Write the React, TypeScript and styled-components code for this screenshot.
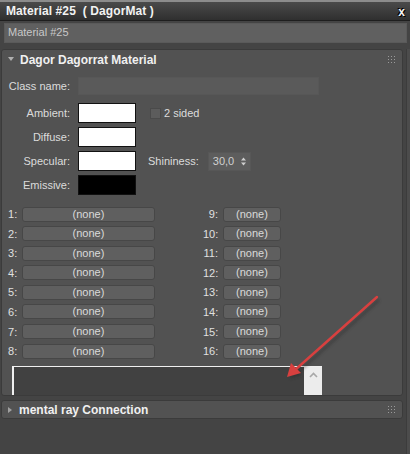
import React from "react";
import styled, { createGlobalStyle } from "styled-components";

const Global = createGlobalStyle`
  html, body { margin: 0; padding: 0; background: #444444; }
  body { font-family: Tahoma, "Liberation Sans", "DejaVu Sans", sans-serif; font-size: 11px; color: #dcdcdc; }
  * { box-sizing: border-box; }
`;

const Frame = styled.div`
  position: relative;
  width: 410px;
  height: 454px;
  background: #444444;
  overflow: hidden;
`;

const TitleBar = styled.div`
  height: 21px;
  border-top: 2px solid #8c8c8c;
  border-bottom: 1px solid #1e1e1e;
  background: linear-gradient(#4a4a4a, #2f2f2f);
  display: flex;
  align-items: center;
  justify-content: space-between;
  padding: 0 5px 0 6px;
`;

const Title = styled.span`
  font-weight: bold;
  font-size: 12px;
  color: #f2f2f2;
  white-space: pre;
  letter-spacing: 0.1px;
`;

const Close = styled.span`
  font-weight: bold;
  font-size: 12px;
  color: #f5f5f5;
  text-shadow: 0 0 1px #000, 1px 1px 0 #000, -1px -1px 0 #000;
  margin-top: 1px;
`;

const NameRow = styled.div`
  padding: 2px 3px 0 4px;
`;

const NameField = styled.div`
  height: 20px;
  background: #606060;
  border: 1px solid #5a5a5a;
  color: #c8c8c8;
  padding: 2px 3px;
  font-size: 11px;
`;

const Panel = styled.div`
  display: flex;
  margin-top: 6px;
`;

const Stack = styled.div`
  width: 403px;
  padding-left: 1px;
  display: flex;
  flex-direction: column;
  gap: 4px;
`;

const Track = styled.div`
  margin-left: 3px;
  width: 4px;
  height: 405px;
  background: #4c4c4c;
  border-left: 1px solid #3c3c3c;
`;

const Rollout = styled.div`
  background: #525252;
  border: 1px solid #3b3b3b;
  border-radius: 3px;
`;

const Header = styled.div<{ $h: number }>`
  height: ${(p) => p.$h}px;
  display: flex;
  align-items: center;
  padding: 0 7px 0 6px;
  font-weight: bold;
  font-size: 12px;
  color: #f0f0f0;
`;

const HeaderText = styled.span`
  flex: 1;
  margin-left: 6px;
`;

const Grip = styled.svg`
  width: 7px;
  height: 7px;
`;

const Body = styled.div`
  height: 326px;
  overflow: hidden;
  padding-top: 8px;
`;

const ClassRow = styled.div`
  display: grid;
  grid-template-columns: 68px 241px;
  column-gap: 8px;
  align-items: center;
  height: 18px;
`;

const Label = styled.span`
  text-align: right;
  white-space: nowrap;
`;

const Field = styled.div`
  height: 18px;
  background: #5a5a5a;
  border: 1px solid #575757;
`;

const ColorGrid = styled.div`
  margin-top: 8px;
  display: grid;
  grid-template-columns: 68px 58px 12px auto;
  grid-auto-rows: 20px;
  row-gap: 4px;
  column-gap: 8px;
  align-items: center;
`;

const Swatch = styled.div<{ $c: string }>`
  width: 58px;
  height: 20px;
  background: ${(p) => p.$c};
  border: 1px solid #111;
`;

const CheckWrap = styled.label`
  grid-column: 3 / span 2;
  display: flex;
  align-items: center;
  gap: 3px;
  margin-left: 6px;
`;

const Box = styled.span`
  width: 11px;
  height: 11px;
  background: #5c5c5c;
  border: 1px solid #4a4a4a;
`;

const ShinyWrap = styled.div`
  grid-column: 3 / span 2;
  display: flex;
  align-items: center;
  gap: 9px;
  margin-left: 4px;
`;

const Spinner = styled.div`
  width: 43px;
  height: 19px;
  background: #5d5d5d;
  border: 1px solid #575757;
  display: flex;
  align-items: center;
  justify-content: space-between;
  padding: 0 4px 0 4px;
  color: #d0d0d0;
`;

const Slots = styled.div`
  margin-top: 12px;
  display: grid;
  grid-template-columns: 12px 133px 44px 18px 58px;
  grid-auto-rows: 14px;
  row-gap: 5.6px;
  column-gap: 2px;
  padding-left: 6px;
  align-items: center;
`;

const SlotLabel = styled.span<{ $right?: boolean }>`
  text-align: ${(p) => (p.$right ? "right" : "left")};
  color: #e0e0e0;
  margin-right: ${(p) => (p.$right ? "3px" : "0")};
`;

const SlotButton = styled.div`
  height: 15px;
  background: #5f5f5f;
  border: 1px solid #474747;
  border-radius: 3px;
  display: flex;
  align-items: center;
  justify-content: center;
  color: #dadada;
  line-height: 1;
`;

const Spacer = styled.span``;

const TextBox = styled.div`
  margin: 8px 0 0 10px;
  width: 310px;
  height: 40px;
  display: flex;
  border-top: 1px solid #f0f0f0;
  border-left: 2px solid #f0f0f0;
  background: #414141;
`;

const TextArea = styled.div`
  flex: 1;
`;

const ScrollCol = styled.div`
  width: 18px;
  background: #ececec;
  display: flex;
  justify-content: center;
  padding-top: 5px;
`;

const Overlay = styled.svg`
  position: absolute;
  left: 0;
  top: 0;
  pointer-events: none;
`;

const GripIcon = () => (
  <Grip viewBox="0 0 7 7">
    {[0, 3, 6].map((y) =>
      [0, 3, 6].map((x) => <rect key={`${x}-${y}`} x={x} y={y} width="1" height="1" fill="#9a9a9a" />)
    )}
  </Grip>
);

const left = Array.from({ length: 8 }, (_, i) => i + 1);

export default function App() {
  return (
    <Frame>
      <Global />
      <TitleBar>
        <Title>{"Material #25  ( DagorMat )"}</Title>
        <Close>x</Close>
      </TitleBar>
      <NameRow>
        <NameField>Material #25</NameField>
      </NameRow>
      <Panel>
        <Stack>
          <Rollout>
            <Header $h={19}>
              <svg width="6" height="5" viewBox="0 0 6 5">
                <path d="M0 0 H6 L3 4 Z" fill="#b0b0b0" />
              </svg>
              <HeaderText>Dagor Dagorrat Material</HeaderText>
              <GripIcon />
            </Header>
            <Body>
              <ClassRow>
                <Label>Class name:</Label>
                <Field />
              </ClassRow>
              <ColorGrid>
                <Label>Ambient:</Label>
                <Swatch $c="#ffffff" />
                <CheckWrap>
                  <Box />
                  <span>2 sided</span>
                </CheckWrap>
                <Label>Diffuse:</Label>
                <Swatch $c="#ffffff" />
                <Spacer />
                <Spacer />
                <Label>Specular:</Label>
                <Swatch $c="#ffffff" />
                <ShinyWrap>
                  <span>Shininess:</span>
                  <Spinner>
                    <span>30,0</span>
                    <svg width="5" height="9" viewBox="0 0 5 9">
                      <path d="M0 3.5 L2.5 0.5 L5 3.5 Z M0 5.5 L2.5 8.5 L5 5.5 Z" fill="#cfcfcf" />
                    </svg>
                  </Spinner>
                </ShinyWrap>
                <Label>Emissive:</Label>
                <Swatch $c="#000000" />
              </ColorGrid>
              <Slots>
                {left.map((n) => (
                  <React.Fragment key={n}>
                    <SlotLabel>{n}:</SlotLabel>
                    <SlotButton>(none)</SlotButton>
                    <Spacer />
                    <SlotLabel $right>{n + 8}:</SlotLabel>
                    <SlotButton>(none)</SlotButton>
                  </React.Fragment>
                ))}
              </Slots>
              <TextBox>
                <TextArea />
                <ScrollCol>
                  <svg width="9" height="6" viewBox="0 0 9 6">
                    <path d="M1 5 L4.5 1.5 L8 5" stroke="#a8a8a8" strokeWidth="1.6" fill="none" />
                  </svg>
                </ScrollCol>
              </TextBox>
            </Body>
          </Rollout>
          <Rollout>
            <Header $h={17}>
              <svg width="5" height="6" viewBox="0 0 5 6">
                <path d="M0 0 V6 L4 3 Z" fill="#a0a0a0" />
              </svg>
              <HeaderText>mental ray Connection</HeaderText>
              <GripIcon />
            </Header>
          </Rollout>
        </Stack>
        <Track />
      </Panel>
      <Overlay width="410" height="454" viewBox="0 0 410 454">
        <defs>
          <filter id="sh" x="-20%" y="-20%" width="140%" height="140%">
            <feGaussianBlur stdDeviation="1.5" />
          </filter>
        </defs>
        <g opacity="0.35" filter="url(#sh)" transform="translate(2,3)">
          <line x1="377" y1="297" x2="295" y2="370" stroke="#222" strokeWidth="3" />
          <path d="M288 376 L292 364 L300 372 Z" fill="#222" />
        </g>
        <line x1="377" y1="297" x2="295" y2="370" stroke="#d8403f" strokeWidth="2.4" strokeLinecap="round" />
        <path d="M287 377 L291 363 L301 373 Z" fill="#d8403f" />
      </Overlay>
    </Frame>
  );
}
